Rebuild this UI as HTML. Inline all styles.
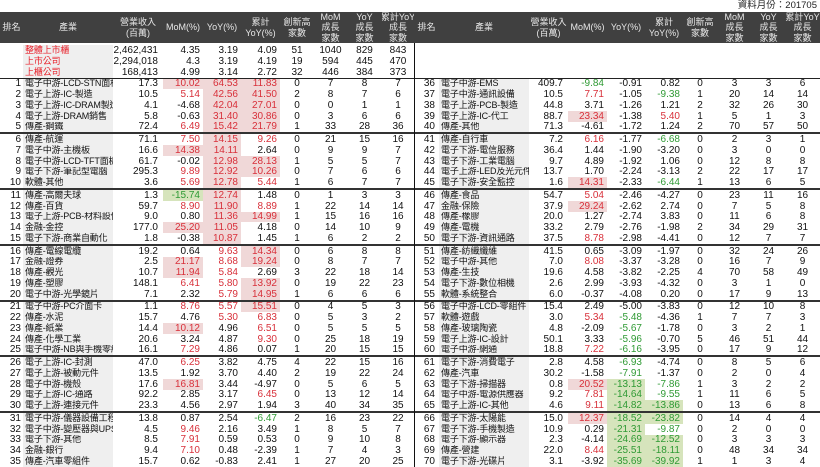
<!DOCTYPE html>
<html><head><meta charset="utf-8"><style>
*{margin:0;padding:0;box-sizing:border-box}
body{width:820px;height:467px;background:#fff;position:relative;overflow:hidden;font-family:"Liberation Sans","Noto Sans CJK TC",sans-serif;font-size:10px;color:#111}
.top{position:absolute;right:3px;top:0;font-size:9.5px;line-height:12px;color:#222}
.hd{position:absolute;left:0;top:12px;width:820px;height:31px;background:#404040;color:#e8e8e8;font-size:9px;line-height:10.5px}
.g{display:grid;grid-template-columns:23px 90px 50px 40px 38px 39px 34px 33px 35px 32px 25px 90px 39px 39px 38px 38px 34px 35px 33px 35px}
.hd .g{height:31px}
.hd span{display:flex;align-items:center;justify-content:center;text-align:center;overflow:hidden;white-space:nowrap}
.sum{position:absolute;left:0;top:44.5px;width:820px}
.body{position:absolute;left:0;top:77.5px;width:820px;height:389.5px;display:flex;flex-direction:column;border-top:1.5px solid #222}
.body .g{flex:1;min-height:0}
.sum .g{height:11px}
.r span{line-height:11px;white-space:nowrap;overflow:hidden;display:flex;align-items:center}
.r span:nth-child(10n+1){justify-content:flex-end;padding-right:2px}
.r span:nth-child(11){padding-right:4px}
.r span:nth-child(10n+2){background:#efefef;padding-left:2px;font-size:9px;letter-spacing:-0.15px}
.r span:nth-child(10n+3){justify-content:flex-end;padding-right:5px}
.r span:nth-child(10n+4),.r span:nth-child(10n+5),.r span:nth-child(10n+6){justify-content:flex-end;padding-right:3px}
.r span:nth-child(10n+7),.r span:nth-child(10n+8),.r span:nth-child(10n+9),.r span:nth-child(10n+10){justify-content:center}
.r.s{border-bottom:2px solid #333}
.sum .r span:nth-child(2){color:#e8202a}
.p{background:#f0d8d8!important;color:#d8303a}
.q{background:#d6e4bc!important;color:#2f9a34}
.e{color:#d8303a}
.n{color:#2f9a34}
.vl{position:absolute;left:414px;top:43px;width:1px;height:424px;background:#111}
</style></head><body>
<div class="top">資料月份：201705</div>
<div class="hd"><div class="g">
<span>排名</span><span>產業</span><span>營業收入<br>(百萬)</span><span>MoM(%)</span><span>YoY(%)</span><span>累計<br>YoY(%)</span><span>創新高<br>家數</span><span>MoM<br>成長<br>家數</span><span>YoY<br>成長<br>家數</span><span>累計YoY<br>成長<br>家數</span>
<span>排名</span><span>產業</span><span>營業收入<br>(百萬)</span><span>MoM(%)</span><span>YoY(%)</span><span>累計<br>YoY(%)</span><span>創新高<br>家數</span><span>MoM<br>成長<br>家數</span><span>YoY<br>成長<br>家數</span><span>累計YoY<br>成長<br>家數</span>
</div></div>
<div class="sum">
<div class="g r"><span></span><span>整體上市櫃</span><span>2,462,431</span><span>4.35</span><span>3.19</span><span>4.09</span><span>51</span><span>1040</span><span>829</span><span>843</span><span></span><span style="background:none"></span><span></span><span></span><span></span><span></span><span></span><span></span><span></span><span></span></div>
<div class="g r"><span></span><span>上市公司</span><span>2,294,018</span><span>4.3</span><span>3.19</span><span>4.19</span><span>19</span><span>594</span><span>445</span><span>470</span><span></span><span style="background:none"></span><span></span><span></span><span></span><span></span><span></span><span></span><span></span><span></span></div>
<div class="g r"><span></span><span>上櫃公司</span><span>168,413</span><span>4.99</span><span>3.14</span><span>2.72</span><span>32</span><span>446</span><span>384</span><span>373</span><span></span><span style="background:none"></span><span></span><span></span><span></span><span></span><span></span><span></span><span></span><span></span></div>
</div>
<div class="body">
<div class="g r"><span>1</span><span>電子中游-LCD-STN面板</span><span>17.3</span><span class="p">10.02</span><span class="p">64.53</span><span class="p">11.83</span><span>0</span><span>7</span><span>8</span><span>7</span><span>36</span><span>電子中游-EMS</span><span>409.7</span><span class="n">-9.84</span><span>-0.91</span><span>0.82</span><span>0</span><span>3</span><span>3</span><span>6</span></div>
<div class="g r"><span>2</span><span>電子上游-IC-製造</span><span>10.5</span><span class="e">5.14</span><span class="p">42.56</span><span class="p">41.50</span><span>2</span><span>8</span><span>7</span><span>6</span><span>37</span><span>電子中游-通訊設備</span><span>10.5</span><span class="e">7.71</span><span>-1.05</span><span class="n">-9.38</span><span>1</span><span>20</span><span>14</span><span>14</span></div>
<div class="g r"><span>3</span><span>電子上游-IC-DRAM製造</span><span>4.1</span><span>-4.68</span><span class="p">42.04</span><span class="p">27.01</span><span>0</span><span>0</span><span>1</span><span>1</span><span>38</span><span>電子上游-PCB-製造</span><span>44.8</span><span>3.71</span><span>-1.26</span><span>1.21</span><span>2</span><span>32</span><span>26</span><span>30</span></div>
<div class="g r"><span>4</span><span>電子上游-DRAM銷售</span><span>5.8</span><span>-0.63</span><span class="p">31.40</span><span class="p">30.86</span><span>0</span><span>3</span><span>6</span><span>6</span><span>39</span><span>電子上游-IC-代工</span><span>88.7</span><span class="p">23.34</span><span>-1.38</span><span class="e">5.40</span><span>1</span><span>5</span><span>1</span><span>3</span></div>
<div class="g r s"><span>5</span><span>傳產-鋼鐵</span><span>72.4</span><span class="e">6.49</span><span class="p">15.42</span><span class="p">21.79</span><span>1</span><span>33</span><span>28</span><span>36</span><span>40</span><span>傳產-其他</span><span>71.3</span><span>-4.61</span><span>-1.72</span><span>1.24</span><span>2</span><span>70</span><span>57</span><span>50</span></div>
<div class="g r"><span>6</span><span>傳產-航運</span><span>71.1</span><span class="e">7.50</span><span class="p">14.15</span><span class="e">9.26</span><span>0</span><span>21</span><span>15</span><span>16</span><span>41</span><span>傳產-自行車</span><span>7.2</span><span class="e">6.16</span><span>-1.77</span><span class="n">-6.68</span><span>0</span><span>2</span><span>3</span><span>1</span></div>
<div class="g r"><span>7</span><span>電子中游-主機板</span><span>16.6</span><span class="p">14.38</span><span class="p">14.11</span><span>2.64</span><span>0</span><span>9</span><span>9</span><span>7</span><span>42</span><span>電子下游-電信服務</span><span>36.4</span><span>1.44</span><span>-1.90</span><span>-3.20</span><span>0</span><span>3</span><span>0</span><span>0</span></div>
<div class="g r"><span>8</span><span>電子中游-LCD-TFT面板</span><span>61.7</span><span>-0.02</span><span class="p">12.98</span><span class="p">28.13</span><span>1</span><span>5</span><span>5</span><span>7</span><span>43</span><span>電子下游-工業電腦</span><span>9.7</span><span>4.89</span><span>-1.92</span><span>1.06</span><span>0</span><span>12</span><span>8</span><span>8</span></div>
<div class="g r"><span>9</span><span>電子下游-筆記型電腦</span><span>295.3</span><span class="e">9.89</span><span class="p">12.92</span><span class="p">10.26</span><span>0</span><span>7</span><span>6</span><span>6</span><span>44</span><span>電子上游-LED及光元件</span><span>13.7</span><span>1.70</span><span>-2.24</span><span>-3.13</span><span>2</span><span>22</span><span>17</span><span>17</span></div>
<div class="g r s"><span>10</span><span>軟體-其他</span><span>3.6</span><span class="e">5.69</span><span class="p">12.78</span><span class="e">5.44</span><span>1</span><span>6</span><span>7</span><span>7</span><span>45</span><span>電子下游-安全監控</span><span>1.6</span><span class="p">14.31</span><span>-2.33</span><span class="n">-6.44</span><span>1</span><span>13</span><span>6</span><span>5</span></div>
<div class="g r"><span>11</span><span>傳產-高爾夫球</span><span>1.3</span><span class="q">-15.74</span><span class="p">12.74</span><span>1.48</span><span>0</span><span>1</span><span>3</span><span>3</span><span>46</span><span>傳產-食品</span><span>54.7</span><span class="e">5.04</span><span>-2.46</span><span>-4.27</span><span>0</span><span>23</span><span>11</span><span>16</span></div>
<div class="g r"><span>12</span><span>傳產-百貨</span><span>59.7</span><span class="e">8.90</span><span class="p">11.90</span><span class="e">8.89</span><span>1</span><span>22</span><span>14</span><span>14</span><span>47</span><span>金融-保險</span><span>37.9</span><span class="p">29.24</span><span>-2.62</span><span>2.74</span><span>0</span><span>7</span><span>5</span><span>8</span></div>
<div class="g r"><span>13</span><span>電子上游-PCB-材料設備</span><span>9.0</span><span>0.80</span><span class="p">11.36</span><span class="p">14.99</span><span>1</span><span>15</span><span>16</span><span>16</span><span>48</span><span>傳產-橡膠</span><span>20.0</span><span>1.27</span><span>-2.74</span><span>3.83</span><span>0</span><span>11</span><span>6</span><span>8</span></div>
<div class="g r"><span>14</span><span>金融-金控</span><span>177.0</span><span class="p">25.20</span><span class="p">11.05</span><span>4.18</span><span>0</span><span>14</span><span>10</span><span>9</span><span>49</span><span>傳產-電機</span><span>33.2</span><span>2.79</span><span>-2.76</span><span>-1.98</span><span>2</span><span>34</span><span>29</span><span>31</span></div>
<div class="g r s"><span>15</span><span>電子下游-商業自動化</span><span>1.8</span><span>-0.38</span><span class="p">10.87</span><span>1.45</span><span>1</span><span>6</span><span>2</span><span>2</span><span>50</span><span>電子下游-資訊通路</span><span>37.5</span><span class="e">8.78</span><span>-2.98</span><span>-4.41</span><span>0</span><span>12</span><span>7</span><span>7</span></div>
<div class="g r"><span>16</span><span>傳產-電線電纜</span><span>19.2</span><span>0.64</span><span class="e">9.63</span><span class="p">14.34</span><span>0</span><span>6</span><span>8</span><span>8</span><span>51</span><span>傳產-紡織纖維</span><span>41.5</span><span>0.65</span><span>-3.09</span><span>-1.97</span><span>0</span><span>32</span><span>24</span><span>26</span></div>
<div class="g r"><span>17</span><span>金融-證券</span><span>2.5</span><span class="p">21.17</span><span class="e">8.68</span><span class="p">19.24</span><span>0</span><span>8</span><span>7</span><span>7</span><span>52</span><span>電子中游-其他</span><span>7.0</span><span class="e">8.08</span><span>-3.37</span><span>-3.28</span><span>0</span><span>16</span><span>7</span><span>9</span></div>
<div class="g r"><span>18</span><span>傳產-觀光</span><span>10.7</span><span class="p">11.94</span><span class="e">5.84</span><span>2.69</span><span>3</span><span>22</span><span>18</span><span>14</span><span>53</span><span>傳產-生技</span><span>19.6</span><span>4.58</span><span>-3.82</span><span>-2.25</span><span>4</span><span>70</span><span>58</span><span>49</span></div>
<div class="g r"><span>19</span><span>傳產-塑膠</span><span>148.1</span><span class="e">6.41</span><span class="e">5.80</span><span class="p">13.92</span><span>0</span><span>19</span><span>22</span><span>23</span><span>54</span><span>電子下游-數位相機</span><span>2.6</span><span>2.99</span><span>-3.93</span><span>-4.32</span><span>0</span><span>3</span><span>1</span><span>0</span></div>
<div class="g r s"><span>20</span><span>電子中游-光學鏡片</span><span>7.1</span><span>2.32</span><span class="e">5.79</span><span class="p">14.95</span><span>1</span><span>6</span><span>6</span><span>6</span><span>55</span><span>軟體-系統整合</span><span>6.0</span><span>-0.37</span><span>-4.08</span><span>0.20</span><span>0</span><span>17</span><span>9</span><span>13</span></div>
<div class="g r"><span>21</span><span>電子中游-PC介面卡</span><span>1.1</span><span class="e">8.76</span><span class="e">5.57</span><span class="p">15.51</span><span>0</span><span>4</span><span>5</span><span>3</span><span>56</span><span>電子中游-LCD-零組件</span><span>15.4</span><span>2.49</span><span>-5.00</span><span>-3.83</span><span>0</span><span>12</span><span>10</span><span>8</span></div>
<div class="g r"><span>22</span><span>傳產-水泥</span><span>15.7</span><span>4.76</span><span class="e">5.30</span><span class="e">6.83</span><span>0</span><span>5</span><span>3</span><span>2</span><span>57</span><span>軟體-遊戲</span><span>3.0</span><span class="e">5.34</span><span class="n">-5.48</span><span>-4.36</span><span>1</span><span>7</span><span>7</span><span>3</span></div>
<div class="g r"><span>23</span><span>傳產-紙業</span><span>14.4</span><span class="p">10.12</span><span>4.96</span><span class="e">6.51</span><span>0</span><span>5</span><span>5</span><span>5</span><span>58</span><span>傳產-玻璃陶瓷</span><span>4.8</span><span>-2.09</span><span class="n">-5.67</span><span>-1.78</span><span>0</span><span>3</span><span>2</span><span>1</span></div>
<div class="g r"><span>24</span><span>傳產-化學工業</span><span>20.6</span><span>3.24</span><span>4.87</span><span class="e">9.30</span><span>0</span><span>25</span><span>18</span><span>19</span><span>59</span><span>電子上游-IC-設計</span><span>50.1</span><span>3.33</span><span class="n">-5.96</span><span>-0.70</span><span>5</span><span>46</span><span>51</span><span>44</span></div>
<div class="g r s"><span>25</span><span>電子中游-NB與手機零組件</span><span>16.1</span><span class="e">7.29</span><span>4.86</span><span>0.07</span><span>1</span><span>20</span><span>15</span><span>15</span><span>60</span><span>電子中游-網通</span><span>18.8</span><span class="e">7.22</span><span class="n">-6.16</span><span>-3.95</span><span>0</span><span>17</span><span>9</span><span>12</span></div>
<div class="g r"><span>26</span><span>電子上游-IC-封測</span><span>47.0</span><span class="e">6.25</span><span>3.82</span><span>4.75</span><span>4</span><span>22</span><span>15</span><span>16</span><span>61</span><span>電子下游-消費電子</span><span>2.8</span><span>4.58</span><span class="n">-6.93</span><span>-4.74</span><span>0</span><span>8</span><span>5</span><span>6</span></div>
<div class="g r"><span>27</span><span>電子上游-被動元件</span><span>13.5</span><span>1.92</span><span>3.70</span><span>4.40</span><span>2</span><span>19</span><span>22</span><span>24</span><span>62</span><span>傳產-汽車</span><span>30.2</span><span>-1.58</span><span class="n">-7.91</span><span>-1.37</span><span>0</span><span>2</span><span>0</span><span>4</span></div>
<div class="g r"><span>28</span><span>電子中游-機殼</span><span>17.6</span><span class="p">16.81</span><span>3.44</span><span>-4.97</span><span>0</span><span>5</span><span>6</span><span>5</span><span>63</span><span>電子下游-掃描器</span><span>0.8</span><span class="p">20.52</span><span class="q">-13.13</span><span class="n">-7.86</span><span>1</span><span>3</span><span>2</span><span>2</span></div>
<div class="g r"><span>29</span><span>電子上游-IC-通路</span><span>92.2</span><span>2.85</span><span>3.17</span><span class="e">6.45</span><span>0</span><span>13</span><span>12</span><span>14</span><span>64</span><span>電子中游-電源供應器</span><span>9.2</span><span class="e">7.81</span><span class="q">-14.64</span><span class="n">-9.55</span><span>1</span><span>11</span><span>6</span><span>5</span></div>
<div class="g r s"><span>30</span><span>電子上游-連接元件</span><span>23.3</span><span>4.56</span><span>2.97</span><span>1.94</span><span>3</span><span>40</span><span>34</span><span>35</span><span>65</span><span>電子上游-IC-其他</span><span>4.6</span><span class="e">9.11</span><span class="q">-14.82</span><span class="q">-13.86</span><span>0</span><span>13</span><span>6</span><span>8</span></div>
<div class="g r"><span>31</span><span>電子中游-儀器設備工程</span><span>13.8</span><span>0.87</span><span>2.54</span><span class="n">-6.47</span><span>2</span><span>16</span><span>23</span><span>22</span><span>66</span><span>電子下游-太陽能</span><span>15.0</span><span class="p">12.37</span><span class="q">-18.52</span><span class="q">-23.82</span><span>0</span><span>14</span><span>4</span><span>4</span></div>
<div class="g r"><span>32</span><span>電子中游-變壓器與UPS</span><span>4.5</span><span class="e">9.46</span><span>2.16</span><span>3.49</span><span>1</span><span>8</span><span>5</span><span>7</span><span>67</span><span>電子下游-手機製造</span><span>10.9</span><span>0.29</span><span class="q">-21.31</span><span class="n">-9.87</span><span>0</span><span>2</span><span>0</span><span>0</span></div>
<div class="g r"><span>33</span><span>電子下游-其他</span><span>8.5</span><span class="e">7.91</span><span>0.59</span><span>0.53</span><span>0</span><span>9</span><span>10</span><span>8</span><span>68</span><span>電子下游-顯示器</span><span>2.3</span><span>-4.14</span><span class="q">-24.69</span><span class="q">-12.52</span><span>0</span><span>3</span><span>3</span><span>3</span></div>
<div class="g r"><span>34</span><span>金融-銀行</span><span>9.4</span><span class="e">7.10</span><span>0.48</span><span>-2.39</span><span>1</span><span>7</span><span>4</span><span>3</span><span>69</span><span>傳產-營建</span><span>22.0</span><span class="e">8.44</span><span class="q">-25.51</span><span class="q">-18.11</span><span>0</span><span>48</span><span>34</span><span>34</span></div>
<div class="g r"><span>35</span><span>傳產-汽車零組件</span><span>15.7</span><span>0.62</span><span>-0.83</span><span>2.41</span><span>1</span><span>27</span><span>20</span><span>25</span><span>70</span><span>電子下游-光碟片</span><span>3.1</span><span>-3.92</span><span class="q">-35.69</span><span class="q">-39.92</span><span>1</span><span>1</span><span>3</span><span>4</span></div>
</div>
<div class="vl"></div>
</body></html>
